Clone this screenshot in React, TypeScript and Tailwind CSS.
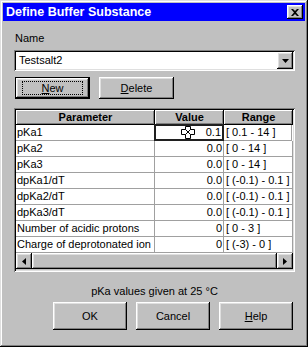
import React from "react";

const raised =
  "shadow-[inset_-1px_-1px_#000,inset_1px_1px_#fff,inset_-2px_-2px_#808080,inset_2px_2px_#dfdfdf]";
const sunken =
  "shadow-[inset_1px_1px_#808080,inset_-1px_-1px_#fff,inset_2px_2px_#000,inset_-2px_-2px_#dfdfdf]";

const rows: [string, string, string][] = [
  ["pKa1", "0.1", "[ 0.1 - 14 ]"],
  ["pKa2", "0.0", "[ 0 - 14 ]"],
  ["pKa3", "0.0", "[ 0 - 14 ]"],
  ["dpKa1/dT", "0.0", "[ (-0.1) - 0.1 ]"],
  ["dpKa2/dT", "0.0", "[ (-0.1) - 0.1 ]"],
  ["dpKa3/dT", "0.0", "[ (-0.1) - 0.1 ]"],
  ["Number of acidic protons", "0", "[ 0 - 3 ]"],
  ["Charge of deprotonated ion", "0", "[ (-3) - 0 ]"],
];

function Cursor() {
  return (
    <svg width="14" height="13" viewBox="0 0 14 13" className="shrink-0">
      <polygon
        points="4.5,0.5 9.5,0.5 9.5,3.5 13.5,3.5 13.5,8.5 9.5,8.5 9.5,12.5 4.5,12.5 4.5,8.5 0.5,8.5 0.5,3.5 4.5,3.5"
        fill="#fff"
        stroke="#000"
        strokeWidth="1"
      />
      <path d="M4.5 3.5 L9.5 8.5 M9.5 3.5 L4.5 8.5" stroke="#000" strokeWidth="1" />
    </svg>
  );
}

function Btn({ children, className = "" }: { children: React.ReactNode; className?: string }) {
  return (
    <div
      className={`bg-[#c0c0c0] ${raised} flex items-center justify-center text-black ${className}`}
    >
      {children}
    </div>
  );
}

export default function App() {
  return (
    <div
      className="w-[308px] h-[347px] bg-[#c0c0c0] p-[3px] flex flex-col text-[11px] text-black shadow-[inset_-1px_-1px_#000,inset_1px_1px_#dfdfdf,inset_-2px_-2px_#808080,inset_2px_2px_#fff]"
      style={{ fontFamily: '"Liberation Sans", Arial, sans-serif' }}
    >
      {/* Title bar */}
      <div className="h-[18px] bg-[#0000ff] flex items-center justify-between pl-[3px] pr-[2px]">
        <span className="text-white font-bold text-[12.5px] leading-none">Define Buffer Substance</span>
        <div className={`w-[16px] h-[14px] bg-[#c0c0c0] ${raised} flex items-center justify-center`}>
          <svg width="8" height="7" viewBox="0 0 8 7">
            <path d="M0 0h2l2 2l2-2h2l-3 3.5l3 3.5h-2l-2-2l-2 2h-2l3-3.5z" fill="#000" />
          </svg>
        </div>
      </div>

      {/* Body */}
      <div className="flex flex-col pl-[11px] pr-[10px]">
        <div className="mt-[11px] h-[13px] leading-[13px] pl-[1px]">Name</div>
        {/* Combo */}
        <div className={`mt-[5px] h-[21px] bg-white ${sunken} flex items-center p-[2px]`}>
          <div className="flex-1 pl-[3px] leading-[13px]">Testsalt2</div>
          <div className={`w-[16px] h-[17px] bg-[#c0c0c0] ${raised} flex items-center justify-center`}>
            <svg width="7" height="4" viewBox="0 0 7 4">
              <path d="M0 0h7l-3.5 4z" fill="#000" />
            </svg>
          </div>
        </div>

        {/* New / Delete */}
        <div className="mt-[6px] flex gap-[9px] pl-[1px]">
          <div className="w-[75px] h-[22px] border border-black">
            <Btn className="w-full h-full">
              <div className="border border-dotted border-black w-[61px] h-[14px] flex items-center justify-center leading-none">
                <span>
                  <span className="underline">N</span>ew
                </span>
              </div>
            </Btn>
          </div>
          <Btn className="w-[75px] h-[22px]">
            <span>
              <span className="underline">D</span>elete
            </span>
          </Btn>
        </div>

        {/* Table */}
        <div className={`mt-[9px] h-[164px] bg-[#c0c0c0] ${sunken} p-[2px] flex flex-col`}>
          <div className="flex h-[15px]">
            {["Parameter", "Value", "Range"].map((h, i) => (
              <div
                key={h}
                className={`${i === 0 ? "w-[139px]" : "w-[69px]"} h-[15px] bg-[#c0c0c0] shadow-[inset_-1px_-1px_#000,inset_1px_1px_#fff,inset_-2px_-2px_#808080] flex items-center justify-center font-bold leading-none`}
              >
                {h}
              </div>
            ))}
          </div>
          {rows.map(([p, v, r], idx) => (
            <div key={p} className="flex h-[16px] bg-white">
              <div className="w-[139px] border-r border-b border-[#a0a0a0] pl-[1px] leading-[15px] whitespace-nowrap overflow-hidden">
                {p}
              </div>
              {idx === 0 ? (
                <div className="w-[70px] h-[17px] border-2 border-[#202020] -mt-[1px] -ml-[1px] flex items-center justify-end gap-[11px] pr-[1px] leading-none">
                  <Cursor />
                  <span>{v}</span>
                </div>
              ) : (
                <div className="w-[69px] border-r border-b border-[#a0a0a0] text-right pr-[1px] leading-[15px]">
                  {v}
                </div>
              )}
              <div
                className={`${idx === 0 ? "w-[68px]" : "w-[69px]"} border-r border-b border-[#a0a0a0] pl-[2px] leading-[15px] whitespace-nowrap`}
              >
                {r}
              </div>
            </div>
          ))}
          {/* Scrollbar */}
          <div className="flex h-[16px] bg-[#c0c0c0] w-[277px]">
            <Btn className="w-[16px] h-[16px]">
              <svg width="4" height="7" viewBox="0 0 4 7">
                <path d="M4 0v7l-4-3.5z" fill="#000" />
              </svg>
            </Btn>
            <div className={`flex-1 h-[16px] bg-[#c0c0c0] ${raised}`} />
            <Btn className="w-[16px] h-[16px]">
              <svg width="4" height="7" viewBox="0 0 4 7">
                <path d="M0 0v7l4-3.5z" fill="#000" />
              </svg>
            </Btn>
          </div>
        </div>

        <div className="mt-[13px] text-center leading-[13px]">pKa values given at 25 °C</div>

        <div className="mt-[4px] flex justify-end gap-[9px] pr-[2px]">
          <Btn className="w-[74px] h-[28px]">OK</Btn>
          <Btn className="w-[74px] h-[28px]">Cancel</Btn>
          <Btn className="w-[74px] h-[28px]">
            <span>
              <span className="underline">H</span>elp
            </span>
          </Btn>
        </div>
      </div>
    </div>
  );
}
